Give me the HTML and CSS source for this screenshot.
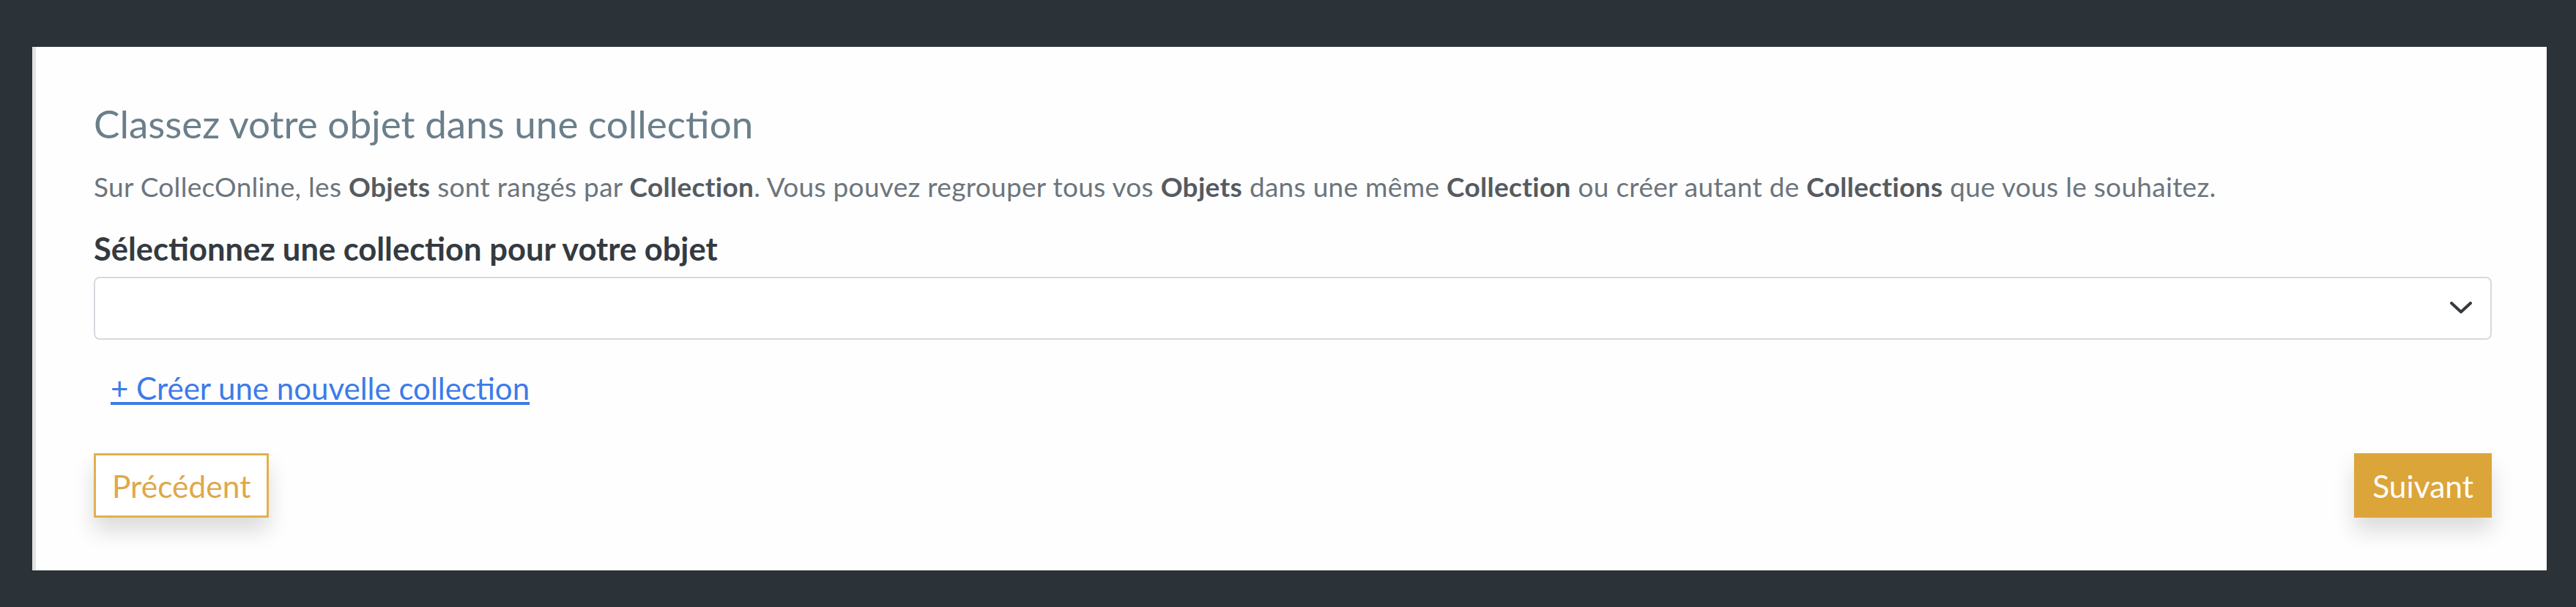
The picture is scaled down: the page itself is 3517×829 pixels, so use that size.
FILE: index.html
```html
<!DOCTYPE html>
<html lang="fr">
<head>
    <meta charset="utf-8" />
    <meta name="viewport" content="width=device-width, initial-scale=1" />
    <title>Classez votre objet</title>
    <link rel="stylesheet" href="styles.css">
</head>
<body>
    <div class="panel">
        <h2 class="step-title">Classez votre objet dans une collection</h2>
        <p class="step-help">Sur CollecOnline, les <b>Objets</b> sont rangés par <b>Collection</b>. Vous pouvez regrouper tous vos <b>Objets</b> dans une même <b>Collection</b> ou créer autant de <b>Collections</b> que vous le souhaitez.</p>
        <label class="field-label" for="collection">Sélectionnez une collection pour votre objet</label>
        <div class="select-wrap">
            <select id="collection" class="select-box">
                <option value=""></option>
            </select>
            <svg class="chevron" width="30" height="17" viewBox="0 0 30 17">
                <polyline points="2,2 15,14 28,2" fill="none" stroke="#343a40" stroke-width="4" stroke-linecap="round" stroke-linejoin="round" />
            </svg>
        </div>
        <a class="new-link" href="#">+ Créer une nouvelle collection</a>
        <div class="actions">
            <button class="btn btn-outline">Précédent</button>
            <button class="btn btn-fill">Suivant</button>
        </div>
    </div>
</body>
</html>
```

FILE: styles.css
```css
body {
    margin: 0;
    padding: 64px 40px 50px 44px;
    background-color: #2b3238;
    font-family: Lato, "Open Sans", sans-serif;
}
.panel {
    background-color: #fefefe;
    border-left: 5px solid #e2e3e4;
    height: 715px;
    box-sizing: border-box;
    padding: 73px 75px 0 79px;
}
.step-title {
    margin: 0;
    font-size: 53px;
    line-height: 64px;
    font-weight: 400;
    color: #6b7f8b;
}
.step-help {
    margin: 32px 0 0;
    font-size: 37px;
    line-height: 43px;
    letter-spacing: 0.3px;
    color: #6c757d;
}
.step-help b {
    color: #555b61;
}
.field-label {
    display: block;
    margin-top: 36px;
    font-size: 43.5px;
    line-height: 54px;
    font-weight: 700;
    color: #343a40;
}
.select-wrap {
    position: relative;
    margin-top: 12px;
}
.select-box {
    display: block;
    width: 100%;
    height: 86px;
    border: 2px solid #d6dadf;
    border-radius: 8px;
    background-color: #fff;
    appearance: none;
    font-family: inherit;
    font-size: 36px;
}
.chevron {
    position: absolute;
    right: 27px;
    top: 34px;
    pointer-events: none;
}
.new-link {
    display: inline-block;
    margin: 40px 0 0 23px;
    font-size: 42px;
    line-height: 53px;
    color: #3d7be8;
}
.actions {
    display: flex;
    justify-content: space-between;
    margin-top: 62px;
}
.btn {
    height: 88px;
    padding: 0 22px;
    font-family: Lato, sans-serif;
    font-size: 42.5px;
    border-radius: 0;
    box-shadow: 0 18px 30px rgba(0, 0, 0, 0.14);
    cursor: pointer;
}
.btn-outline {
    background-color: #fff;
    border: 3px solid #e2b04e;
    color: #dfa84a;
}
.btn-fill {
    background-color: #dca53a;
    border: 3px solid #dca53a;
    color: #fff;
}
```
